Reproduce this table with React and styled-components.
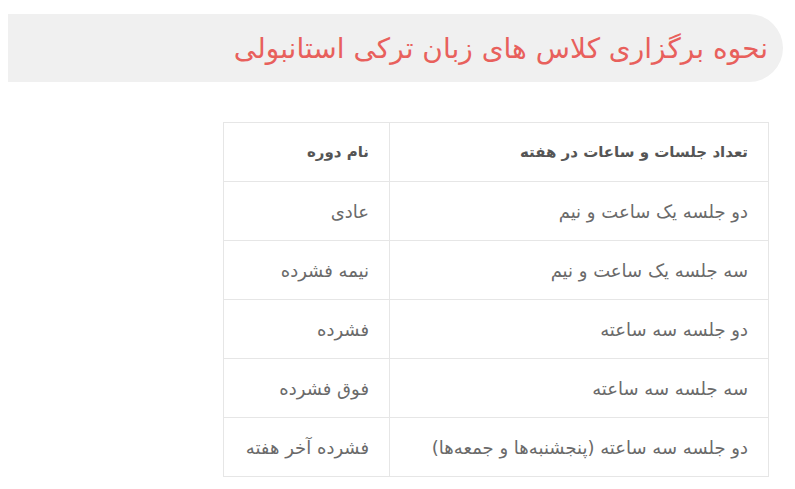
import React from "react";
import styled, { createGlobalStyle } from "styled-components";

const GlobalStyle = createGlobalStyle`
  body {
    margin: 0;
    background: #ffffff;
    font-family: "DejaVu Sans", "Noto Sans", sans-serif;
  }
`;

const Page = styled.div`
  direction: rtl;
  padding: 14px 12px 0 8px;
`;

const TitleBar = styled.div`
  background-color: #f0f0f0;
  height: 68px;
  border-radius: 0 34px 34px 0;
  display: flex;
  align-items: center;
  padding-right: 15px;
`;

const Title = styled.h2`
  margin: 0;
  font-size: 28px;
  font-weight: normal;
  color: #e8605c;
`;

const TableWrap = styled.div`
  display: flex;
  margin-top: 40px;
  padding-right: 14px;
`;

const Table = styled.table`
  width: 546px;
  border-collapse: collapse;
  border: 1px solid #e6e6e6;
`;

const Cell = styled.td`
  height: 58px;
  padding: 0 20px;
  border: 1px solid #e6e6e6;
  text-align: right;
  font-size: ${({ head }) => (head ? "15px" : "18px")};
  color: ${({ head }) => (head ? "#555555" : "#6a6a6a")};
  font-weight: ${({ head }) => (head ? "bold" : "normal")};
  width: ${({ wide }) => (wide ? "338px" : "auto")};
`;

const rows = [
  ["دو جلسه یک ساعت و نیم", "عادی"],
  ["سه جلسه یک ساعت و نیم", "نیمه فشرده"],
  ["دو جلسه سه ساعته", "فشرده"],
  ["سه جلسه سه ساعته", " فوق فشرده"],
  ["دو جلسه سه ساعته (پنجشنبه‌ها و جمعه‌ها)", "فشرده آخر هفته"],
];

export default function App() {
  return (
    <Page>
      <GlobalStyle />
      <TitleBar>
        <Title>نحوه برگزاری کلاس های زبان ترکی استانبولی</Title>
      </TitleBar>
      <TableWrap>
        <Table>
          <tbody>
            <tr>
              <Cell head wide>تعداد جلسات و ساعات در هفته</Cell>
              <Cell head>نام دوره</Cell>
            </tr>
            {rows.map(([a, b]) => (
              <tr key={a}>
                <Cell wide>{a}</Cell>
                <Cell>{b}</Cell>
              </tr>
            ))}
          </tbody>
        </Table>
      </TableWrap>
    </Page>
  );
}
